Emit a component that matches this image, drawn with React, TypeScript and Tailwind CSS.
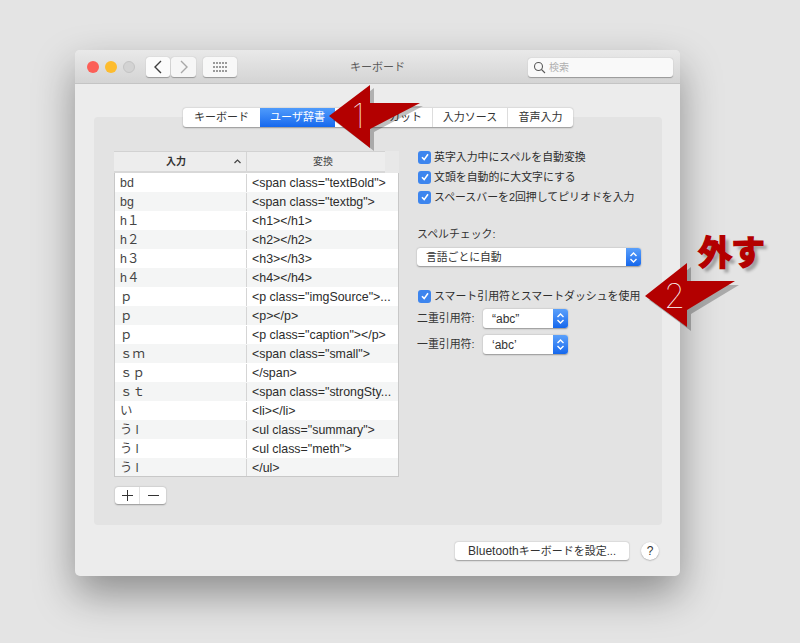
import React from 'react';

const rows = [
  ['bd', '<span class="textBold">'],
  ['bg', '<span class="textbg">'],
  ['h１', '<h1></h1>'],
  ['h２', '<h2></h2>'],
  ['h３', '<h3></h3>'],
  ['h４', '<h4></h4>'],
  ['ｐ', '<p class="imgSource">...'],
  ['ｐ', '<p></p>'],
  ['ｐ', '<p class="caption"></p>'],
  ['ｓｍ', '<span class="small">'],
  ['ｓｐ', '</span>'],
  ['ｓｔ', '<span class="strongSty...'],
  ['い', '<li></li>'],
  ['う l', '<ul class="summary">'],
  ['う l', '<ul class="meth">'],
  ['う l', '</ul>'],
];

const Stepper: React.FC = () => (
  <span className="flex h-full w-[15px] items-center justify-center rounded-r-[3px] bg-gradient-to-b from-[#5aa0fb] to-[#1467ec]">
    <svg width="9" height="13" viewBox="0 0 9 13" fill="none" stroke="white" strokeWidth="1.4">
      <path d="M1.5 5 L4.5 2 L7.5 5" />
      <path d="M1.5 8 L4.5 11 L7.5 8" />
    </svg>
  </span>
);

const Check: React.FC<{ label: string }> = ({ label }) => (
  <div className="flex h-[20px] items-center">
    <span className="ml-px flex h-[13px] w-[13px] items-center justify-center rounded-[3px] bg-[#3d85ee]">
      <svg width="10" height="10" viewBox="0 0 10 10" fill="none" stroke="white" strokeWidth="1.6">
        <path d="M2 5.2 L4.2 7.6 L8 2.2" />
      </svg>
    </span>
    <span className="ml-[3px] text-[10.9px] text-[#2e2e2e]">{label}</span>
  </div>
);

const Select: React.FC<{ label: string; className: string; textClass: string }> = ({ label, className, textClass }) => (
  <div className={`flex items-center justify-between rounded-[3px] bg-white shadow-[0_0.5px_1.5px_rgba(0,0,0,0.35)] ${className}`}>
    <span className={`text-[#333] ${textClass}`}>{label}</span>
    <Stepper />
  </div>
);

const tabs = [
  { label: 'キーボード', w: 'w-[77px]' },
  { label: 'ユーザ辞書', w: 'w-[75px]', active: true },
  { label: 'ショートカット', w: 'w-[97px]' },
  { label: '入力ソース', w: 'w-[75px]' },
  { label: '音声入力', w: 'w-[66px]' },
];

export default function App() {
  return (
    <div
      className="relative h-[643px] w-[800px] overflow-hidden bg-[#e4e4e4] pl-[75px] pt-[50px] text-[#333]"
      style={{ fontFamily: '"Liberation Sans", "Noto Sans CJK JP", sans-serif' }}
    >
      <div className="h-[526px] w-[605px] overflow-hidden rounded-[5px] bg-[#ececec] shadow-[0_18px_40px_rgba(0,0,0,0.38)]">
        {/* title bar */}
        <div className="flex h-[34px] items-center border-b border-[#c4c4c4] bg-gradient-to-b from-[#e9e9e9] to-[#d4d4d4] pl-[12px] pt-px">
          <span className="h-[12px] w-[12px] rounded-full bg-[#fc5f57]" />
          <span className="ml-[6px] h-[12px] w-[12px] rounded-full bg-[#fdbc2e]" />
          <span className="ml-[6px] h-[12px] w-[12px] rounded-full border border-[#c4c4c4] bg-[#d3d3d3]" />
          <button className="ml-[11px] flex h-[20px] w-[24px] items-center justify-center rounded-[3px] bg-[#fbfbfb] shadow-[0_0.5px_1px_rgba(0,0,0,0.3)]">
            <svg width="10" height="14" viewBox="0 0 10 14" fill="none" stroke="#3c3c3c" strokeWidth="1.4">
              <path d="M8 1 L2 7 L8 13" />
            </svg>
          </button>
          <button className="ml-px flex h-[20px] w-[25px] items-center justify-center rounded-[3px] bg-[#f6f6f6] shadow-[0_0.5px_1px_rgba(0,0,0,0.3)]">
            <svg width="10" height="14" viewBox="0 0 10 14" fill="none" stroke="#a8a8a8" strokeWidth="1.4">
              <path d="M2 1 L8 7 L2 13" />
            </svg>
          </button>
          <button className="ml-[7px] flex h-[20px] w-[34px] items-center justify-center rounded-[3px] bg-[#f8f8f8] shadow-[0_0.5px_1px_rgba(0,0,0,0.3)]">
            <svg width="14" height="10" viewBox="0 0 14 10" fill="#666">
              {[1, 4, 7, 10, 13].map((x) =>
                [1, 5, 9].map((y) => <rect key={`${x}-${y}`} x={x - 0.8} y={y - 0.8} width="1.6" height="1.6" />),
              )}
            </svg>
          </button>
          <span className="ml-[113px] text-[11px] text-[#5a5a5a]">キーボード</span>
          <div className="ml-[123px] flex h-[19px] w-[145px] items-center rounded-[3px] bg-[#f9f9f9] pl-[5px] shadow-[0_0.5px_1px_rgba(0,0,0,0.3)]">
            <svg width="13" height="13" viewBox="0 0 13 13" fill="none" stroke="#5a5a5a" strokeWidth="1.1">
              <circle cx="5.5" cy="5.5" r="4" />
              <path d="M8.5 8.5 L12 12" />
            </svg>
            <span className="ml-[3px] text-[10px] text-[#b0b0b0]">検索</span>
          </div>
        </div>

        {/* main panel */}
        <div className="pl-[19px] pt-[33px]">
          <div className="flex h-[408px] w-[568px] flex-col rounded-[4px] bg-[#e3e3e3]">
            <div className="-mt-[9px] ml-[89px] flex h-[19px] w-[390px] overflow-hidden rounded-[3px] bg-white shadow-[0_0.5px_1.5px_rgba(0,0,0,0.35)]">
              {tabs.map((t, i) => (
                <span
                  key={t.label}
                  className={`flex h-full items-center justify-center text-[11px] ${t.w} ${
                    t.active ? 'bg-gradient-to-b from-[#4f9bfb] to-[#1568ee] text-white' : 'text-[#333]'
                  } ${i > 2 ? 'border-l border-[#ddd]' : ''}`}
                >
                  {t.label}
                </span>
              ))}
            </div>

            <div className="flex pl-[20px] pt-[24px]">
              {/* dictionary table */}
              <div className="w-[285px]">
                <div className="flex h-[22px] w-[285px] bg-[#e8e8e8]">
                  <div className="flex h-full w-[271px] border-t border-[#d2d2d2] border-b-2 border-b-[#d8d8d8] bg-[#ededed] text-[10px]">
                    <div className="relative flex w-[133px] items-center justify-center border-r border-[#d5d5d5] pr-[8px] font-semibold text-[#333]">
                      入力
                      <svg className="absolute right-[5px] top-[7px]" width="7" height="5" viewBox="0 0 7 5" fill="none" stroke="#444" strokeWidth="1.2">
                        <path d="M0.5 4 L3.5 1 L6.5 4" />
                      </svg>
                    </div>
                    <div className="flex flex-1 items-center justify-center pl-[14px] text-[#444]">変換</div>
                  </div>
                </div>
                <div className="h-[304px] overflow-hidden border-b border-r border-l border-[#c8c8c8]">
                  {rows.map(([key, val], i) => (
                    <div key={i} className={`flex h-[19px] items-center pt-px text-[12.4px] text-[#2c2c2c] ${i % 2 === 0 ? 'bg-white' : 'bg-[#f4f5f5]'}`}>
                      <div className="flex h-full w-[132px] items-center border-r border-[#d5d5d5] pl-[5px] text-[#444]">{key}</div>
                      <div className="pl-[5px] whitespace-nowrap">{val}</div>
                    </div>
                  ))}
                </div>
                <div className="ml-px mt-[10px] flex h-[17px] w-[51px] rounded-[3px] bg-white shadow-[0_0.5px_1.5px_rgba(0,0,0,0.35)]">
                  <span className="flex w-[25px] items-center justify-center border-r border-[#e2e2e2]">
                    <svg width="11" height="11" viewBox="0 0 11 11" stroke="#333" strokeWidth="1"><path d="M0 5.5 H11 M5.5 0 V11" /></svg>
                  </span>
                  <span className="flex flex-1 items-center justify-center">
                    <svg width="11" height="11" viewBox="0 0 11 11" stroke="#333" strokeWidth="1"><path d="M0 5.5 H11" /></svg>
                  </span>
                </div>
              </div>

              {/* options */}
              <div className="ml-[18px] w-[240px]">
                <div className="-mt-[4px]">
                  <Check label="英字入力中にスペルを自動変換" />
                  <Check label="文頭を自動的に大文字にする" />
                  <Check label="スペースバーを2回押してピリオドを入力" />
                </div>
                <div className="mt-[19px] text-[10.9px] leading-[16px] text-[#333]">スペルチェック:</div>
                <Select label="言語ごとに自動" className="mt-[6px] h-[18px] w-[224px]" textClass="pl-[9px] text-[10.8px]" />
                <div className="mt-[20px]">
                  <Check label="スマート引用符とスマートダッシュを使用" />
                </div>
                <div className="mt-[3px] flex h-[19px] items-center">
                  <span className="w-[66px] text-[10.9px] text-[#333]">二重引用符:</span>
                  <Select label="“abc”" className="h-[19px] w-[85px]" textClass="pl-[9px] text-[12px]" />
                </div>
                <div className="mt-[7px] flex h-[19px] items-center">
                  <span className="w-[66px] text-[10.9px] text-[#333]">一重引用符:</span>
                  <Select label="‘abc’" className="h-[19px] w-[85px]" textClass="pl-[9px] text-[12px]" />
                </div>
              </div>
            </div>
          </div>

          {/* footer buttons */}
          <div className="mt-[17px] flex items-center pl-[361px]">
            <button className="flex h-[18px] w-[174px] items-center justify-center rounded-[3px] bg-white text-[11px] text-[#333] shadow-[0_0.5px_1.5px_rgba(0,0,0,0.35)]">
              <span className="text-[12px]">Bluetooth</span>キーボードを設定...
            </button>
            <button className="ml-[12px] flex h-[18px] w-[18px] items-center justify-center rounded-full bg-white text-[12px] text-[#333] shadow-[0_0.5px_1.5px_rgba(0,0,0,0.35)]">
              ?
            </button>
          </div>
        </div>
      </div>

      {/* annotations */}
      <svg className="absolute left-[320px] top-[80px]" width="110" height="75" viewBox="320 80 110 75">
        <polygon points="333,120 374,88 374,106 423,106 374,132 374,151" fill="#000" opacity="0.25" />
        <polygon points="329,116 370,85 370,103 420,103 370,129 370,148" fill="#b30000" />
      </svg>
      <span className="absolute left-[352px] top-[94px] font-['Inter'] text-[34px] font-thin leading-[44px] text-white">1</span>

      <svg className="absolute left-[640px] top-[258px]" width="105" height="75" viewBox="640 258 105 75">
        <polygon points="649,300 691,267 691,285 739,285 691,314 691,331" fill="#000" opacity="0.25" />
        <polygon points="645,296 687,263 687,281 735,281 687,310 687,327" fill="#b30000" />
      </svg>
      <span className="absolute left-[664px] top-[274px] font-['Inter'] text-[34px] font-thin leading-[44px] text-white">2</span>

      <span className="absolute left-[698px] top-[231px] text-[34px] font-bold leading-[44px] tracking-[-1px] text-[#b30000] [-webkit-text-stroke:1.5px_#b30000] [text-shadow:4px_4px_3px_rgba(0,0,0,0.3)]">
        外す
      </span>
    </div>
  );
}
